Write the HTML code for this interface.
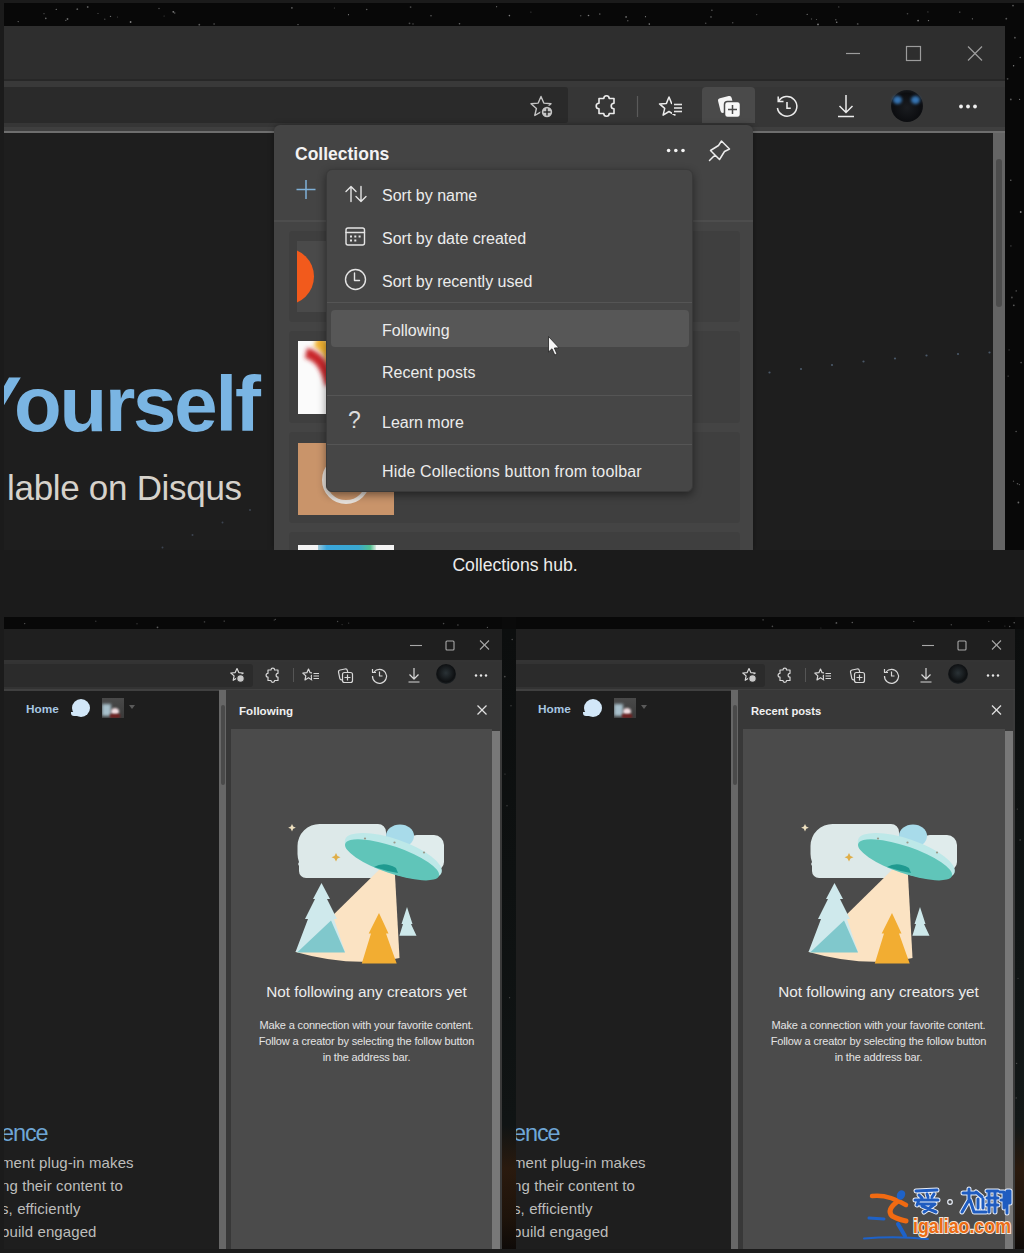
<!DOCTYPE html>
<html><head><meta charset="utf-8">
<style>
*{box-sizing:border-box;margin:0;padding:0}
html,body{width:1024px;height:1253px;overflow:hidden;background:#1b1b1b;font-family:"Liberation Sans",sans-serif}
.a{position:absolute}
svg{position:absolute;overflow:visible}
</style></head><body>
<div class="a" style="left:0;top:0;width:1024px;height:1253px">

<!-- ===== TOP SCREENSHOT ===== -->
<div class="a" style="left:4px;top:3px;width:1020px;height:547px;background:#080808"></div>

<div class="a" id="topwin" style="left:0;top:0;width:1024px;height:1253px;clip-path:inset(26px 19px 703px 4px)">
<div class="a" style="left:4px;top:26px;width:1001px;height:524px;background:#1e1e1e"></div>
<div class="a" style="left:4px;top:26px;width:1001px;height:53px;background:#2e2e2e"></div>
<div class="a" style="left:4px;top:79px;width:1001px;height:1.5px;background:#272727"></div>
<div class="a" style="left:4px;top:80.5px;width:1001px;height:46.5px;background:#363636"></div>
<div class="a" style="left:4px;top:80.5px;width:1001px;height:6px;background:#393939"></div>
<div class="a" style="left:4px;top:127px;width:1001px;height:5px;background:#3f3f3f"></div>
<div class="a" style="left:4px;top:131px;width:1001px;height:1.5px;background:#6e6e6e"></div>
<!-- address bar -->
<div class="a" style="left:4px;top:87px;width:563.5px;height:36px;background:#2a2a2a;border-radius:0 3px 3px 0"></div>
<!-- window controls -->
<svg style="left:0;top:0" width="1024" height="140">
 <g stroke="#9c9c9c" stroke-width="1.2" fill="none">
  <line x1="846" y1="53.5" x2="860" y2="53.5"/>
  <rect x="906.5" y="46.5" width="14" height="14"/>
  <line x1="968" y1="46.5" x2="982" y2="60.5"/><line x1="982" y1="46.5" x2="968" y2="60.5"/>
 </g>
 <!-- favorite star + plus -->
 <path d="M541.0 96.5 L543.8 103.1 L551.0 103.8 L545.6 108.5 L547.2 115.5 L541.0 111.8 L534.8 115.5 L536.4 108.5 L531.0 103.8 L538.2 103.1 Z" stroke="#c4c4c4" stroke-width="1.4" fill="none" stroke-linejoin="round"/>
 <circle cx="547" cy="112" r="6" fill="#c4c4c4" stroke="#2a2a2a" stroke-width="1.6"/>
 <g stroke="#262626" stroke-width="1.4"><line x1="547" y1="108.5" x2="547" y2="115.5"/><line x1="543.5" y1="112" x2="550.5" y2="112"/></g>
 <!-- extensions -->
 <path d="M599 98.5 H603.8 A2.7 2.7 0 0 1 609.2 98.5 H614 V103.2 A2.8 2.8 0 0 0 614 108.8 V113.5 H609.2 A2.7 2.7 0 0 1 603.8 113.5 H599 V108.8 A2.8 2.8 0 0 1 599 103.2 Z" stroke="#ececec" stroke-width="1.6" fill="none" stroke-linejoin="round"/>
 <line x1="637.5" y1="96" x2="637.5" y2="117" stroke="#5a5a5a" stroke-width="1.2"/>
 <!-- favorites -->
 <path d="M669.0 97.0 L671.6 103.4 L678.5 103.9 L673.3 108.4 L674.9 115.1 L669.0 111.5 L663.1 115.1 L664.7 108.4 L659.5 103.9 L666.4 103.4 Z" stroke="#ececec" stroke-width="1.5" fill="none" stroke-linejoin="round"/>
 <rect x="672" y="102" width="12" height="12" fill="#363636"/>
 <g stroke="#e4e4e4" stroke-width="1.6"><line x1="674" y1="104.5" x2="682" y2="104.5"/><line x1="674" y1="108" x2="682" y2="108"/><line x1="674" y1="111.5" x2="682" y2="111.5"/></g>
</svg>
<!-- collections highlight -->
<div class="a" style="left:702px;top:87px;width:53px;height:36px;background:#4a4a4a;border-radius:4px 4px 0 0"></div>
<svg style="left:0;top:0" width="1024" height="140">
 <rect x="719" y="97" width="14" height="15" rx="2.5" fill="#f4f4f4" transform="rotate(-14 726 104)"/>
 <rect x="724.5" y="101.5" width="16" height="16" rx="3" fill="#f8f8f8" stroke="#4a4a4a" stroke-width="1.5"/>
 <g stroke="#4a4a4a" stroke-width="1.5"><line x1="732.5" y1="105" x2="732.5" y2="114"/><line x1="728" y1="109.5" x2="737" y2="109.5"/></g>
 <!-- history -->
 <path d="M778.6 101.4 A9.8 9.8 0 1 1 777.4 108" stroke="#ececec" stroke-width="1.5" fill="none"/>
 <path d="M783.5 101.4 H778.2 V96.5" stroke="#ececec" stroke-width="1.5" fill="none"/>
 <path d="M787 102 v6.2 h3.8" stroke="#ececec" stroke-width="1.6" fill="none"/>
 <!-- download -->
 <path d="M846 95 v17.5 M839.5 106 l6.5 6.5 l6.5 -6.5 M838 116.5 h16" stroke="#ececec" stroke-width="1.5" fill="none"/>
 <!-- more -->
 <g fill="#f0f0f0"><circle cx="961" cy="106.5" r="1.9"/><circle cx="968" cy="106.5" r="1.9"/><circle cx="975" cy="106.5" r="1.9"/></g>
</svg>
<!-- profile -->
<div class="a" style="left:891px;top:90px;width:32px;height:32px;border-radius:50%;background:radial-gradient(circle at 50% 55%,#1a1c20 0,#0c0d10 60%,#2a2f36 100%)"></div>
<div class="a" style="left:893px;top:96px;width:9px;height:8px;border-radius:50%;background:#3a7fc4;filter:blur(1.5px);opacity:.9"></div>
<div class="a" style="left:911px;top:96px;width:9px;height:8px;border-radius:50%;background:#3a7fc4;filter:blur(1.5px);opacity:.9"></div>
<!-- page scrollbar -->
<div class="a" style="left:993px;top:133px;width:12px;height:417px;background:#646464"></div>
<div class="a" style="left:996px;top:159px;width:6px;height:148px;background:#4c4c4c;border-radius:3px"></div>
<svg style="left:0;top:0" width="1024" height="600"><circle cx="769.5" cy="372.5" r="1.1" fill="#4a5868"/><circle cx="801" cy="369" r="1.1" fill="#4a5868"/><circle cx="832" cy="365" r="1.1" fill="#4a5868"/><circle cx="863.5" cy="361.5" r="1.1" fill="#4a5868"/><circle cx="895" cy="358.5" r="1.1" fill="#4a5868"/><circle cx="926.5" cy="355.5" r="1.1" fill="#4a5868"/><circle cx="958" cy="354" r="1.1" fill="#4a5868"/><circle cx="989.5" cy="352.5" r="1.1" fill="#4a5868"/><circle cx="250" cy="510" r="1" fill="#3c4450"/><circle cx="222.5" cy="522.5" r="1" fill="#3c4450"/><circle cx="192.5" cy="535" r="1" fill="#3c4450"/><circle cx="162.5" cy="547.5" r="1" fill="#3c4450"/></svg>
<!-- page text -->
<div class="a" style="left:-30px;top:353.5px;font-size:78px;font-weight:bold;color:#7ab5e3;letter-spacing:-2.2px;white-space:nowrap;line-height:100px">Yourself</div>
<div class="a" style="left:7px;top:465.5px;font-size:35px;color:#d6d2cb;white-space:nowrap;line-height:44px;letter-spacing:-0.3px">lable on Disqus</div>

<!-- ===== COLLECTIONS PANEL ===== -->
<div class="a" style="left:274px;top:125px;width:479px;height:425px;background:#444444;border-radius:6px 6px 0 0;box-shadow:0 0 6px rgba(0,0,0,.35)"></div>
<div class="a" style="left:295px;top:141.5px;font-size:17.5px;font-weight:bold;color:#f2f2f2;line-height:24px;white-space:nowrap">Collections</div>
<svg style="left:0;top:0" width="1024" height="240">
 <g fill="#f4f4f4"><circle cx="668.6" cy="150.5" r="1.8"/><circle cx="675.8" cy="150.5" r="1.8"/><circle cx="683" cy="150.5" r="1.8"/></g>
 <path d="M721.5 141 L729.5 149 L724.5 151.5 L719.5 159.5 L710.5 150.5 L718.5 145.5 Z M715 155 L709.5 160.5" stroke="#ececec" stroke-width="1.5" fill="none" stroke-linejoin="round" stroke-linecap="round"/>
 <g stroke="#7fb0d8" stroke-width="1.5"><line x1="306" y1="180" x2="306" y2="199"/><line x1="296.5" y1="189.5" x2="315.5" y2="189.5"/></g>
</svg>
<div class="a" style="left:274px;top:220px;width:479px;height:2px;background:#4d4d4d"></div>
<!-- cards -->
<div class="a" style="left:289px;top:231px;width:451px;height:91px;background:#3f3f3f;border-radius:4px"></div>
<div class="a" style="left:289px;top:331px;width:451px;height:92px;background:#3f3f3f;border-radius:4px"></div>
<div class="a" style="left:289px;top:432px;width:451px;height:91px;background:#3f3f3f;border-radius:4px"></div>
<div class="a" style="left:289px;top:532px;width:451px;height:30px;background:#3f3f3f;border-radius:4px"></div>
<!-- thumbs -->
<div class="a" style="left:297px;top:241px;width:97px;height:71px;background:#4a4a4a;overflow:hidden">
  <div class="a" style="left:-41px;top:7px;width:58px;height:57px;border-radius:50%;background:#f25a1c"></div>
</div>
<div class="a" style="left:298px;top:341px;width:96px;height:73px;background:#fbfbfb;overflow:hidden">
  <svg style="left:0;top:0" width="96" height="73"><defs><filter id="bl" x="-50%" y="-50%" width="200%" height="200%"><feGaussianBlur stdDeviation="2.2"/></filter></defs>
   <path d="M18 0 Q32 6 34 24" stroke="#f2b232" stroke-width="12" fill="none" filter="url(#bl)"/>
   <path d="M8 12 Q26 16 32 44" stroke="#c9262c" stroke-width="10" fill="none" filter="url(#bl)"/>
  </svg>
</div>
<div class="a" style="left:298px;top:443px;width:96px;height:72px;background:#c9946a;overflow:hidden">
  <div class="a" style="left:24px;top:13px;width:48px;height:48px;border-radius:50%;border:4.5px solid #e6e0da"></div>
</div>
<div class="a" style="left:298px;top:545px;width:96px;height:5px;background:#f4f4f4;overflow:hidden">
  <div class="a" style="left:20px;top:0;width:58px;height:5px;background:linear-gradient(90deg,#a0c8d8,#3aa6dc 15%,#3aa8d0 70%,#50c090 90%,#d8e8e0)"></div>
</div>
<!-- menu -->
<div class="a" style="left:326px;top:169px;width:367px;height:323px;background:#464646;border-radius:6px;border:1px solid #3a3a3a;box-shadow:0 3px 8px rgba(0,0,0,.45)"></div>
<div class="a" style="left:327px;top:302px;width:365px;height:1px;background:#555"></div>
<div class="a" style="left:327px;top:395px;width:365px;height:1px;background:#555"></div>
<div class="a" style="left:327px;top:444px;width:365px;height:1px;background:#555"></div>
<div class="a" style="left:331px;top:310px;width:358px;height:37px;background:#575757;border-radius:4px"></div>
<div class="a" style="left:382px;top:0;font-size:16px;color:#ececec;white-space:nowrap;line-height:20px">
  <div class="a" style="left:0;top:185.5px">Sort by name</div>
  <div class="a" style="left:0;top:228.5px">Sort by date created</div>
  <div class="a" style="left:0;top:271.5px">Sort by recently used</div>
  <div class="a" style="left:0;top:320.5px">Following</div>
  <div class="a" style="left:0;top:362.5px">Recent posts</div>
  <div class="a" style="left:0;top:412.5px">Learn more</div>
  <div class="a" style="left:0;top:461.5px;letter-spacing:.15px">Hide Collections button from toolbar</div>
</div>
<svg style="left:0;top:0" width="1024" height="500">
 <g stroke="#e4e4e4" stroke-width="1.4" fill="none" stroke-linecap="round" stroke-linejoin="round">
  <path d="M351 201.5 V186.5 M346 191.5 l5 -5 l5 5"/>
  <path d="M361 186.5 V201.5 M356 196.5 l5 5 l5 -5"/>
  <rect x="346" y="228" width="18.5" height="17" rx="2"/>
  <line x1="346" y1="232.5" x2="364.5" y2="232.5"/>
  <circle cx="355.5" cy="279.5" r="10"/>
  <path d="M354.5 273 v7.5 h5"/>
 </g>
 <g fill="#e4e4e4"><rect x="350" y="235.5" width="2" height="2"/><rect x="354.3" y="235.5" width="2" height="2"/><rect x="358.6" y="235.5" width="2" height="2"/><rect x="350" y="239.5" width="2" height="2"/><rect x="354.3" y="239.5" width="2" height="2"/></g>
 <!-- cursor -->
 <path d="M548.5 336.5 V352 L552 348.8 L554.8 355 L557 354 L554.3 348 L559 347.8 Z" fill="#f4f4f4" stroke="#222" stroke-width="0.8"/>
</svg>
<div class="a" style="left:348px;top:406px;font-size:23px;color:#dcdcdc;line-height:28px">?</div>

</div>
<div class="a" style="left:0;top:554px;width:1030px;text-align:center;font-size:17.6px;color:#ececec;line-height:22px">Collections hub.</div>
<!-- ===== BOTTOM ===== -->
<div class="a" style="left:4px;top:617px;width:1020px;height:632px;background:#0a0a0a"></div>
<div class="a" style="left:4px;top:617px;width:498px;height:632px;overflow:hidden;background:#1e1e1e">
<div class="a" style="left:0;top:0;width:100%;height:12px;background:#080808"></div>
<div class="a" style="left:0;top:12px;width:100%;height:31px;background:#1f1f1f"></div>
<div class="a" style="left:0;top:43px;width:100%;height:2px;background:#343434"></div>
<div class="a" style="left:0;top:45px;width:100%;height:27px;background:#333333"></div>
<div class="a" style="left:0;top:47px;width:249px;height:22.5px;background:#2b2b2b;border-radius:0 3px 3px 0"></div>
<div class="a" style="left:0;top:72px;width:100%;height:2px;background:#404040"></div>
<div class="a" style="left:215px;top:73px;width:7.5px;height:559px;background:#676767"></div>
<div class="a" style="left:217px;top:88px;width:3.5px;height:80px;background:#4a4a4a;border-radius:2px"></div>
<div class="a" style="left:222px;top:73px;width:276px;height:559px;background:#383838"></div>
<div class="a" style="left:227px;top:112px;width:261px;height:520px;background:#4b4b4b"></div>
<div class="a" style="left:488px;top:114px;width:8px;height:518px;background:#787878"></div>
<div class="a" style="left:496px;top:73px;width:2px;height:559px;background:#3a3a3a"></div>
<div class="a" style="left:235px;top:86px;font-size:11.6px;font-weight:bold;color:#f0f0f0;line-height:16px;white-space:nowrap">Following</div>
<div class="a" style="left:22px;top:84.5px;font-size:11.8px;font-weight:bold;color:#a8c7e2;line-height:14px">Home</div>
<div class="a" style="left:68px;top:82px;width:18px;height:18px;border-radius:50%;background:#d2e7f8"></div><div class="a" style="left:67px;top:95px;width:6px;height:4px;background:#d2e7f8;border-radius:0 0 0 3px"></div>
<div class="a" style="left:98px;top:81px;width:22px;height:20px;background:linear-gradient(180deg,#4a4a4a,#3a3a3a);overflow:hidden"><div class="a" style="left:0;top:6px;width:9px;height:12px;background:#a8c0cc;filter:blur(1.5px)"></div><div class="a" style="left:9px;top:10px;width:8px;height:7px;border-radius:50%;background:#f0dce0;filter:blur(1px)"></div><div class="a" style="left:8px;top:16px;width:10px;height:4px;background:#702020;filter:blur(1px)"></div></div>
<div class="a" style="left:125px;top:88px;width:0;height:0;border-left:3.5px solid transparent;border-right:3.5px solid transparent;border-top:4px solid #5a5a5a"></div>
<div class="a" style="left:-3px;top:500.5px;font-size:23.5px;color:#6ea6d6;line-height:30px;white-space:nowrap;letter-spacing:-1.1px">ence</div>
<div class="a" style="left:-3px;top:534px;font-size:15px;color:#bdbdbb;line-height:23px;white-space:nowrap;letter-spacing:0.1px">ment plug-in makes<br>ng their content to<br>s, efficiently<br>build engaged</div>
<div class="a" style="left:227px;top:365px;width:271px;text-align:center;font-size:15.3px;color:#ececec;line-height:20px;white-space:nowrap">Not following any creators yet</div>
<div class="a" style="left:227px;top:400px;width:271px;text-align:center;font-size:11px;color:#e4e4e4;line-height:16px;white-space:nowrap;letter-spacing:-0.15px">Make a connection with your favorite content.<br>Follow a creator by selecting the follow button<br>in the address bar.</div>
</div>
<svg style="left:4px;top:617px" width="500" height="632">
 <g stroke="#a8a8a8" stroke-width="1.1" fill="none">
  <line x1="406" y1="28.5" x2="418" y2="28.5"/>
  <rect x="442" y="24" width="8" height="9" rx="1"/>
  <line x1="476" y1="23.5" x2="485" y2="32.5"/><line x1="485" y1="23.5" x2="476" y2="32.5"/>
 </g>
 <g stroke="#d8d8d8" stroke-width="1.2" fill="none" stroke-linejoin="round">
  <path d="M233.0 51.5 L234.8 55.6 L239.2 56.0 L235.9 58.9 L236.8 63.3 L233.0 61.0 L229.2 63.3 L230.1 58.9 L226.8 56.0 L231.2 55.6 Z"/>
  <path d="M264 53 H267 A1.8 1.8 0 0 1 270.6 53 H274 V56.3 A1.9 1.9 0 0 0 274 60.1 V63.5 H270.6 A1.8 1.8 0 0 1 267 63.5 H264 V60.1 A1.9 1.9 0 0 1 264 56.3 Z"/>
  <path d="M304.5 52.0 L306.1 55.7 L310.2 56.1 L307.2 58.9 L308.0 62.9 L304.5 60.8 L301.0 62.9 L301.8 58.9 L298.8 56.1 L302.9 55.7 Z"/>
  <rect x="308" y="55" width="8" height="8" fill="#333333" stroke="none"/>
  <path d="M309.5 56.5 h5.5 M309.5 59 h5.5 M309.5 61.5 h5.5"/>
  <rect x="335" y="52.5" width="9" height="10" rx="2" transform="rotate(-12 339 57)"/>
  <rect x="338.5" y="55.5" width="10" height="10" rx="2" fill="#333333"/>
  <path d="M343.5 57.5 v6 M340.5 60.5 h6"/>
  <path d="M370 55 A7 7 0 1 1 368.5 59"/><path d="M368.5 52 v3.5 h3.5"/><path d="M375.5 54.5 v4.5 h3"/>
  <path d="M410 51 v10.5 M405.5 57.5 l4.5 4.5 l4.5 -4.5 M404.5 65 h11"/>
 </g>
 <line x1="289.5" y1="51" x2="289.5" y2="65" stroke="#555" stroke-width="1"/>
 <circle cx="236.5" cy="61.5" r="3.8" fill="#c8c8c8" stroke="#2b2b2b" stroke-width="1.2"/>
 <g fill="#e8e8e8"><circle cx="472" cy="58.5" r="1.2"/><circle cx="477" cy="58.5" r="1.2"/><circle cx="482" cy="58.5" r="1.2"/></g>
 <g stroke="#e0e0e0" stroke-width="1.2" transform="translate(0 0)"><line x1="473.5" y1="88.5" x2="482.5" y2="97.5"/><line x1="482.5" y1="88.5" x2="473.5" y2="97.5"/></g>
</svg>
<div class="a" style="left:436px;top:664px;width:20px;height:20px;border-radius:50%;background:radial-gradient(circle at 50% 45%,#2a3236 0,#0e1012 60%,#3a4448 100%)"></div>
<div class="a" style="left:516px;top:617px;width:499px;height:632px;overflow:hidden;background:#1e1e1e">
<div class="a" style="left:0;top:0;width:100%;height:12px;background:#080808"></div>
<div class="a" style="left:0;top:12px;width:100%;height:31px;background:#1f1f1f"></div>
<div class="a" style="left:0;top:43px;width:100%;height:2px;background:#343434"></div>
<div class="a" style="left:0;top:45px;width:100%;height:27px;background:#333333"></div>
<div class="a" style="left:0;top:47px;width:249px;height:22.5px;background:#2b2b2b;border-radius:0 3px 3px 0"></div>
<div class="a" style="left:0;top:72px;width:100%;height:2px;background:#404040"></div>
<div class="a" style="left:215px;top:73px;width:7.5px;height:559px;background:#676767"></div>
<div class="a" style="left:217px;top:88px;width:3.5px;height:80px;background:#4a4a4a;border-radius:2px"></div>
<div class="a" style="left:222px;top:73px;width:277px;height:559px;background:#383838"></div>
<div class="a" style="left:227px;top:112px;width:262px;height:520px;background:#4b4b4b"></div>
<div class="a" style="left:489px;top:114px;width:8px;height:518px;background:#787878"></div>
<div class="a" style="left:497px;top:73px;width:2px;height:559px;background:#3a3a3a"></div>
<div class="a" style="left:235px;top:86px;font-size:11.2px;font-weight:bold;color:#f0f0f0;line-height:16px;white-space:nowrap">Recent posts</div>
<div class="a" style="left:22px;top:84.5px;font-size:11.8px;font-weight:bold;color:#a8c7e2;line-height:14px">Home</div>
<div class="a" style="left:68px;top:82px;width:18px;height:18px;border-radius:50%;background:#d2e7f8"></div><div class="a" style="left:67px;top:95px;width:6px;height:4px;background:#d2e7f8;border-radius:0 0 0 3px"></div>
<div class="a" style="left:98px;top:81px;width:22px;height:20px;background:linear-gradient(180deg,#4a4a4a,#3a3a3a);overflow:hidden"><div class="a" style="left:0;top:6px;width:9px;height:12px;background:#a8c0cc;filter:blur(1.5px)"></div><div class="a" style="left:9px;top:10px;width:8px;height:7px;border-radius:50%;background:#f0dce0;filter:blur(1px)"></div><div class="a" style="left:8px;top:16px;width:10px;height:4px;background:#702020;filter:blur(1px)"></div></div>
<div class="a" style="left:125px;top:88px;width:0;height:0;border-left:3.5px solid transparent;border-right:3.5px solid transparent;border-top:4px solid #5a5a5a"></div>
<div class="a" style="left:-3px;top:500.5px;font-size:23.5px;color:#6ea6d6;line-height:30px;white-space:nowrap;letter-spacing:-1.1px">ence</div>
<div class="a" style="left:-3px;top:534px;font-size:15px;color:#bdbdbb;line-height:23px;white-space:nowrap;letter-spacing:0.1px">ment plug-in makes<br>ng their content to<br>s, efficiently<br>build engaged</div>
<div class="a" style="left:227px;top:365px;width:271px;text-align:center;font-size:15.3px;color:#ececec;line-height:20px;white-space:nowrap">Not following any creators yet</div>
<div class="a" style="left:227px;top:400px;width:271px;text-align:center;font-size:11px;color:#e4e4e4;line-height:16px;white-space:nowrap;letter-spacing:-0.15px">Make a connection with your favorite content.<br>Follow a creator by selecting the follow button<br>in the address bar.</div>
</div>
<svg style="left:516px;top:617px" width="500" height="632">
 <g stroke="#a8a8a8" stroke-width="1.1" fill="none">
  <line x1="406" y1="28.5" x2="418" y2="28.5"/>
  <rect x="442" y="24" width="8" height="9" rx="1"/>
  <line x1="476" y1="23.5" x2="485" y2="32.5"/><line x1="485" y1="23.5" x2="476" y2="32.5"/>
 </g>
 <g stroke="#d8d8d8" stroke-width="1.2" fill="none" stroke-linejoin="round">
  <path d="M233.0 51.5 L234.8 55.6 L239.2 56.0 L235.9 58.9 L236.8 63.3 L233.0 61.0 L229.2 63.3 L230.1 58.9 L226.8 56.0 L231.2 55.6 Z"/>
  <path d="M264 53 H267 A1.8 1.8 0 0 1 270.6 53 H274 V56.3 A1.9 1.9 0 0 0 274 60.1 V63.5 H270.6 A1.8 1.8 0 0 1 267 63.5 H264 V60.1 A1.9 1.9 0 0 1 264 56.3 Z"/>
  <path d="M304.5 52.0 L306.1 55.7 L310.2 56.1 L307.2 58.9 L308.0 62.9 L304.5 60.8 L301.0 62.9 L301.8 58.9 L298.8 56.1 L302.9 55.7 Z"/>
  <rect x="308" y="55" width="8" height="8" fill="#333333" stroke="none"/>
  <path d="M309.5 56.5 h5.5 M309.5 59 h5.5 M309.5 61.5 h5.5"/>
  <rect x="335" y="52.5" width="9" height="10" rx="2" transform="rotate(-12 339 57)"/>
  <rect x="338.5" y="55.5" width="10" height="10" rx="2" fill="#333333"/>
  <path d="M343.5 57.5 v6 M340.5 60.5 h6"/>
  <path d="M370 55 A7 7 0 1 1 368.5 59"/><path d="M368.5 52 v3.5 h3.5"/><path d="M375.5 54.5 v4.5 h3"/>
  <path d="M410 51 v10.5 M405.5 57.5 l4.5 4.5 l4.5 -4.5 M404.5 65 h11"/>
 </g>
 <line x1="289.5" y1="51" x2="289.5" y2="65" stroke="#555" stroke-width="1"/>
 <circle cx="236.5" cy="61.5" r="3.8" fill="#c8c8c8" stroke="#2b2b2b" stroke-width="1.2"/>
 <g fill="#e8e8e8"><circle cx="472" cy="58.5" r="1.2"/><circle cx="477" cy="58.5" r="1.2"/><circle cx="482" cy="58.5" r="1.2"/></g>
 <g stroke="#e0e0e0" stroke-width="1.2" transform="translate(2.5 0)"><line x1="473.5" y1="88.5" x2="482.5" y2="97.5"/><line x1="482.5" y1="88.5" x2="473.5" y2="97.5"/></g>
</svg>
<div class="a" style="left:948px;top:664px;width:20px;height:20px;border-radius:50%;background:radial-gradient(circle at 50% 45%,#2a3236 0,#0e1012 60%,#3a4448 100%)"></div>
<!-- ===== END BOTTOM ===== -->
<!-- ===== ILLUS ===== -->
<svg style="left:0;top:0" width="1024" height="1253"><g transform="translate(0 0)">
 <path d="M292 824 l1.2 2.6 l2.6 1.1 l-2.6 1.1 l-1.2 2.6 l-1.2 -2.6 l-2.6 -1.1 l2.6 -1.1 z" fill="#eee0bf"/>
 <!-- right cloud -->
 <path d="M405 870 H436 a8 8 0 0 0 8 -8 V845 a10 10 0 0 0 -10 -10 H418 a12 12 0 0 0 -13 12 z" fill="#e0ecec"/>
 <!-- dome -->
 <ellipse cx="400" cy="836" rx="14" ry="11.5" fill="#a8dbea"/>
 <!-- main cloud -->
 <path d="M320 824 H378 a8 8 0 0 1 8 8 V870 a8 8 0 0 1 -8 8 H306 a7 7 0 0 1 -7 -7 V866 a3 3 0 0 1 0 -4 a24 24 0 0 1 -1.5 -8 V846 a22 22 0 0 1 22.5 -22 z" fill="#dde9e9"/>
 <path d="M336 853 l1.5 3 l3 1.2 l-3 1.2 l-1.5 3 l-1.5 -3 l-3 -1.2 l3 -1.2 z" fill="#dfae48"/>
 <!-- beam -->
 <path d="M383 866 L394.5 866 L399.5 958 Q352 968 295.5 952 Z" fill="#fbe3c3"/>
 <!-- disk -->
 <g transform="rotate(19 393 857)">
  <ellipse cx="393" cy="856" rx="51" ry="17" fill="#bde8e8"/>
  <ellipse cx="393" cy="860" rx="49.5" ry="13.5" fill="#60c5b9"/>
 </g>
 <path d="M374 867 q10 -6 22 1 l2 5 q-12 -2 -24 -6z" fill="#1f9a90"/>
 <g fill="#9a9a8a"><circle cx="365" cy="838.5" r="1.1"/><circle cx="394.5" cy="842.5" r="1.1"/><circle cx="424" cy="852.5" r="1.1"/></g>
 <!-- light tree -->
 <path d="M321.5 883 L330 899 L327 899 L337 919 L334 919 L345 952 L295.5 952 L308 919 L305 919 L315 899 L313 899 Z" fill="#cfe9ec"/>
 <path d="M331 920.5 L345 952.5 L297 952.5 Z" fill="#80c8cc"/>
 <!-- orange tree -->
 <path d="M379 913 L388.5 933.5 L386 933.5 L396.7 963.5 L361.8 963.5 L371 933.5 L368.7 933.5 Z" fill="#f2ad32"/>
 <!-- small tree -->
 <path d="M407 907 L412.5 924 L411 924 L416.5 935.7 L399.4 935.7 L403 924 L401.5 924 Z" fill="#cde8ea"/>
</g></svg>
<svg style="left:0;top:0" width="1024" height="1253"><g transform="translate(513 0)">
 <path d="M292 824 l1.2 2.6 l2.6 1.1 l-2.6 1.1 l-1.2 2.6 l-1.2 -2.6 l-2.6 -1.1 l2.6 -1.1 z" fill="#eee0bf"/>
 <!-- right cloud -->
 <path d="M405 870 H436 a8 8 0 0 0 8 -8 V845 a10 10 0 0 0 -10 -10 H418 a12 12 0 0 0 -13 12 z" fill="#e0ecec"/>
 <!-- dome -->
 <ellipse cx="400" cy="836" rx="14" ry="11.5" fill="#a8dbea"/>
 <!-- main cloud -->
 <path d="M320 824 H378 a8 8 0 0 1 8 8 V870 a8 8 0 0 1 -8 8 H306 a7 7 0 0 1 -7 -7 V866 a3 3 0 0 1 0 -4 a24 24 0 0 1 -1.5 -8 V846 a22 22 0 0 1 22.5 -22 z" fill="#dde9e9"/>
 <path d="M336 853 l1.5 3 l3 1.2 l-3 1.2 l-1.5 3 l-1.5 -3 l-3 -1.2 l3 -1.2 z" fill="#dfae48"/>
 <!-- beam -->
 <path d="M383 866 L394.5 866 L399.5 958 Q352 968 295.5 952 Z" fill="#fbe3c3"/>
 <!-- disk -->
 <g transform="rotate(19 393 857)">
  <ellipse cx="393" cy="856" rx="51" ry="17" fill="#bde8e8"/>
  <ellipse cx="393" cy="860" rx="49.5" ry="13.5" fill="#60c5b9"/>
 </g>
 <path d="M374 867 q10 -6 22 1 l2 5 q-12 -2 -24 -6z" fill="#1f9a90"/>
 <g fill="#9a9a8a"><circle cx="365" cy="838.5" r="1.1"/><circle cx="394.5" cy="842.5" r="1.1"/><circle cx="424" cy="852.5" r="1.1"/></g>
 <!-- light tree -->
 <path d="M321.5 883 L330 899 L327 899 L337 919 L334 919 L345 952 L295.5 952 L308 919 L305 919 L315 899 L313 899 Z" fill="#cfe9ec"/>
 <path d="M331 920.5 L345 952.5 L297 952.5 Z" fill="#80c8cc"/>
 <!-- orange tree -->
 <path d="M379 913 L388.5 933.5 L386 933.5 L396.7 963.5 L361.8 963.5 L371 933.5 L368.7 933.5 Z" fill="#f2ad32"/>
 <!-- small tree -->
 <path d="M407 907 L412.5 924 L411 924 L416.5 935.7 L399.4 935.7 L403 924 L401.5 924 Z" fill="#cde8ea"/>
</g></svg>
<!-- ===== END ILLUS ===== -->
<div class="a" style="left:502px;top:629px;width:14px;height:620px;background:linear-gradient(180deg,#0c0e0e 0,#101414 80%,#2a1a0e 87%,#1e130a 95%,#0e0a08 100%)"></div>
<div class="a" style="left:1015px;top:629px;width:9px;height:620px;background:linear-gradient(180deg,#0c0e0e 0,#131818 80%,#2a1a0e 87%,#1e130a 95%,#0e0a08 100%)"></div>
<!-- ===== STARS ===== -->
<svg style="left:0;top:0" width="1024" height="1253"><circle cx="334.4" cy="8.0" r="0.6" fill="#4a4a4a"/><circle cx="838.8" cy="6.9" r="0.6" fill="#5a5a5a"/><circle cx="44.0" cy="13.7" r="0.6" fill="#5a5a5a"/><circle cx="98.0" cy="13.5" r="0.6" fill="#5a5a5a"/><circle cx="645.5" cy="16.7" r="0.6" fill="#808080"/><circle cx="56.3" cy="9.4" r="0.7" fill="#6a6a6a"/><circle cx="431.0" cy="15.8" r="0.8" fill="#5a5a5a"/><circle cx="110.5" cy="16.4" r="0.7" fill="#6a6a6a"/><circle cx="104.8" cy="19.2" r="0.6" fill="#5a5a5a"/><circle cx="509.4" cy="15.6" r="0.8" fill="#808080"/><circle cx="599.8" cy="14.1" r="0.8" fill="#5a5a5a"/><circle cx="811.5" cy="19.0" r="0.7" fill="#4a4a4a"/><circle cx="588.5" cy="15.5" r="0.8" fill="#808080"/><circle cx="298.0" cy="24.6" r="0.6" fill="#808080"/><circle cx="173.3" cy="11.8" r="0.9" fill="#808080"/><circle cx="45.8" cy="18.4" r="0.8" fill="#6a6a6a"/><circle cx="711.0" cy="16.9" r="0.9" fill="#4a4a4a"/><circle cx="857.7" cy="23.9" r="0.9" fill="#4a4a4a"/><circle cx="67.5" cy="19.0" r="0.9" fill="#6a6a6a"/><circle cx="732.7" cy="22.7" r="0.8" fill="#4a4a4a"/><circle cx="959.8" cy="12.1" r="0.6" fill="#808080"/><circle cx="65.8" cy="20.4" r="0.7" fill="#5a5a5a"/><circle cx="409.5" cy="23.3" r="0.9" fill="#4a4a4a"/><circle cx="174.7" cy="13.0" r="0.8" fill="#5a5a5a"/><circle cx="836.7" cy="22.3" r="0.8" fill="#808080"/><circle cx="1006.3" cy="18.7" r="0.9" fill="#5a5a5a"/><circle cx="159.0" cy="8.5" r="0.7" fill="#5a5a5a"/><circle cx="18.2" cy="21.6" r="0.7" fill="#6a6a6a"/><circle cx="291.9" cy="7.9" r="0.8" fill="#6a6a6a"/><circle cx="972.4" cy="18.8" r="0.6" fill="#808080"/><circle cx="918.1" cy="20.6" r="0.9" fill="#808080"/><circle cx="410.6" cy="7.1" r="0.9" fill="#4a4a4a"/><circle cx="199.3" cy="24.7" r="0.9" fill="#5a5a5a"/><circle cx="117.5" cy="17.0" r="0.6" fill="#4a4a4a"/><circle cx="580.7" cy="15.7" r="0.8" fill="#4a4a4a"/><circle cx="77.3" cy="9.2" r="0.9" fill="#5a5a5a"/><circle cx="649.3" cy="24.1" r="0.8" fill="#808080"/><circle cx="130.6" cy="22.0" r="0.9" fill="#808080"/><circle cx="496.6" cy="6.7" r="0.6" fill="#6a6a6a"/><circle cx="756.7" cy="14.6" r="0.7" fill="#4a4a4a"/><circle cx="214.1" cy="24.0" r="0.8" fill="#5a5a5a"/><circle cx="705.7" cy="23.3" r="0.8" fill="#4a4a4a"/><circle cx="711.9" cy="10.2" r="0.8" fill="#5a5a5a"/><circle cx="366.7" cy="9.5" r="0.8" fill="#5a5a5a"/><circle cx="627.8" cy="20.8" r="0.7" fill="#5a5a5a"/><circle cx="835.8" cy="19.8" r="0.7" fill="#5a5a5a"/><circle cx="530.9" cy="12.1" r="0.6" fill="#4a4a4a"/><circle cx="807.2" cy="14.4" r="0.7" fill="#6a6a6a"/><circle cx="459.5" cy="23.7" r="0.8" fill="#6a6a6a"/><circle cx="87.7" cy="7.0" r="0.9" fill="#5a5a5a"/><circle cx="348.5" cy="14.7" r="0.6" fill="#808080"/><circle cx="927.9" cy="11.9" r="0.6" fill="#4a4a4a"/><circle cx="928.5" cy="20.6" r="0.7" fill="#808080"/><circle cx="907.5" cy="13.7" r="0.8" fill="#4a4a4a"/><circle cx="818.0" cy="24.4" r="0.9" fill="#808080"/><circle cx="413.0" cy="23.9" r="0.7" fill="#5a5a5a"/><circle cx="1013.0" cy="5.6" r="0.9" fill="#5a5a5a"/><circle cx="626.1" cy="16.9" r="0.9" fill="#6a6a6a"/><circle cx="164.1" cy="16.0" r="0.6" fill="#4a4a4a"/><circle cx="816.5" cy="19.5" r="0.6" fill="#5a5a5a"/><circle cx="1013.5" cy="481.3" r="0.7" fill="#4a4a4a"/><circle cx="1010.8" cy="180.3" r="0.7" fill="#6a6a6a"/><circle cx="1010.9" cy="245.9" r="0.7" fill="#4a4a4a"/><circle cx="1020.7" cy="212.0" r="0.9" fill="#808080"/><circle cx="1019.4" cy="484.6" r="0.7" fill="#5a5a5a"/><circle cx="1014.9" cy="37.7" r="0.9" fill="#5a5a5a"/><circle cx="1016.1" cy="431.5" r="0.7" fill="#5a5a5a"/><circle cx="1009.1" cy="349.9" r="0.6" fill="#4a4a4a"/><circle cx="1011.9" cy="297.5" r="0.9" fill="#4a4a4a"/><circle cx="1020.2" cy="57.5" r="0.7" fill="#6a6a6a"/><circle cx="1007.6" cy="78.8" r="0.9" fill="#4a4a4a"/><circle cx="1018.4" cy="502.5" r="0.9" fill="#6a6a6a"/><circle cx="1016.2" cy="290.9" r="0.7" fill="#6a6a6a"/><circle cx="1013.8" cy="305.3" r="0.9" fill="#5a5a5a"/><circle cx="1017.5" cy="483.8" r="0.8" fill="#5a5a5a"/><circle cx="1019.6" cy="99.3" r="0.6" fill="#808080"/><circle cx="1013.6" cy="65.7" r="0.7" fill="#808080"/><circle cx="1008.1" cy="376.1" r="0.6" fill="#5a5a5a"/><circle cx="1021.1" cy="362.6" r="0.8" fill="#5a5a5a"/><circle cx="1010.8" cy="99.4" r="0.9" fill="#5a5a5a"/><circle cx="763.1" cy="619.8" r="0.9" fill="#3a3a3a"/><circle cx="1009.7" cy="626.5" r="0.7" fill="#5a5a5a"/><circle cx="443.6" cy="623.6" r="0.8" fill="#4a4a4a"/><circle cx="204.5" cy="621.9" r="0.8" fill="#3a3a3a"/><circle cx="348.7" cy="623.1" r="0.6" fill="#4a4a4a"/><circle cx="342.1" cy="624.6" r="0.6" fill="#3a3a3a"/><circle cx="1004.9" cy="626.1" r="0.6" fill="#3a3a3a"/><circle cx="275.3" cy="619.4" r="0.7" fill="#4a4a4a"/><circle cx="772.4" cy="626.4" r="0.8" fill="#4a4a4a"/><circle cx="157.5" cy="627.3" r="0.9" fill="#5a5a5a"/><circle cx="337.6" cy="621.5" r="0.7" fill="#4a4a4a"/><circle cx="913.8" cy="621.4" r="0.6" fill="#5a5a5a"/><circle cx="95.8" cy="621.3" r="0.7" fill="#3a3a3a"/><circle cx="274.2" cy="620.1" r="0.6" fill="#4a4a4a"/><circle cx="1014.2" cy="622.8" r="0.8" fill="#5a5a5a"/><circle cx="137.0" cy="623.7" r="0.7" fill="#3a3a3a"/><circle cx="988.8" cy="621.4" r="0.7" fill="#3a3a3a"/><circle cx="951.3" cy="624.7" r="0.7" fill="#4a4a4a"/><circle cx="457.9" cy="625.0" r="0.8" fill="#4a4a4a"/><circle cx="820.9" cy="628.0" r="0.6" fill="#3a3a3a"/><circle cx="24.7" cy="623.6" r="0.7" fill="#5a5a5a"/><circle cx="487.4" cy="627.4" r="0.6" fill="#5a5a5a"/><circle cx="836.4" cy="622.9" r="0.9" fill="#5a5a5a"/><circle cx="852.3" cy="622.5" r="0.8" fill="#5a5a5a"/><circle cx="224.2" cy="621.1" r="0.7" fill="#5a5a5a"/><circle cx="511.0" cy="705.8" r="0.8" fill="#3a3a3a"/><circle cx="512.2" cy="639.5" r="0.8" fill="#4a4a4a"/><circle cx="504.8" cy="676.6" r="0.9" fill="#4a4a4a"/><circle cx="509.6" cy="997.7" r="0.6" fill="#4a4a4a"/><circle cx="505.0" cy="774.1" r="0.6" fill="#4a4a4a"/><circle cx="507.0" cy="805.7" r="0.8" fill="#3a3a3a"/><circle cx="1016.2" cy="1097.9" r="0.7" fill="#4a4a4a"/><circle cx="1017.3" cy="809.1" r="0.6" fill="#4a4a4a"/><circle cx="1018.0" cy="978.4" r="0.7" fill="#3a3a3a"/><circle cx="1016.6" cy="1063.4" r="0.7" fill="#4a4a4a"/><circle cx="1020.1" cy="840.0" r="0.8" fill="#4a4a4a"/></svg>
<!-- ===== END STARS ===== -->
<!-- ===== WATERMARK ===== -->
<svg style="left:0;top:0" width="1024" height="1253">
 <g fill="none" stroke-linecap="round" stroke-linejoin="round">
  <path d="M872 1196 Q888 1194 906 1205" stroke="#f06a12" stroke-width="4.5"/>
  <path d="M898 1201 Q886 1210 892 1216 Q900 1220 906 1221" stroke="#f06a12" stroke-width="5"/>
  <path d="M869 1218 L884 1219" stroke="#1e62c8" stroke-width="3"/>
  <path d="M898 1224 L905 1236" stroke="#1e62c8" stroke-width="4"/>
  <path d="M864 1238.5 Q896 1236 928 1239" stroke="#1e62c8" stroke-width="2"/>
 </g>
 <ellipse cx="901" cy="1195" rx="4" ry="5" fill="#1e62c8" transform="rotate(30 901 1195)"/>
 <g stroke="#e8eef8" stroke-width="5" fill="none" stroke-linecap="round" stroke-linejoin="round" id="wmo">
  <path d="M916 1191 L937 1190 M919 1195 L922 1198 M927 1194 L928 1197 M934 1194 L932 1197 M915 1200 L938 1200 M919 1200 L917 1205 M920 1204 L935 1204 L924 1212 M922 1206 L936 1212"/>
  <path d="M963 1193 L975 1193 M969 1189 L969 1200 L962 1212 M970 1200 L974 1212 L986 1212 M976 1192 L982 1197 M978 1199 L978 1208 M983 1199 L983 1208"/>
  <path d="M987 1191 L998 1191 M989 1191 L989 1212 M995 1191 L995 1212 M987 1198 L998 1198 M987 1205 L998 1205 M1000 1192 L1004 1192 L1004 1208 M1001 1200 L1004 1200 M1007 1191 L1010 1191 L1010 1203 L1008 1203 M1007 1191 L1007 1213"/>
 </g>
 <g stroke="#1f5cc0" stroke-width="3" fill="none" stroke-linecap="round" stroke-linejoin="round">
  <path d="M916 1191 L937 1190 M919 1195 L922 1198 M927 1194 L928 1197 M934 1194 L932 1197 M915 1200 L938 1200 M919 1200 L917 1205 M920 1204 L935 1204 L924 1212 M922 1206 L936 1212"/>
  <path d="M963 1193 L975 1193 M969 1189 L969 1200 L962 1212 M970 1200 L974 1212 L986 1212 M976 1192 L982 1197 M978 1199 L978 1208 M983 1199 L983 1208"/>
  <path d="M987 1191 L998 1191 M989 1191 L989 1212 M995 1191 L995 1212 M987 1198 L998 1198 M987 1205 L998 1205 M1000 1192 L1004 1192 L1004 1208 M1001 1200 L1004 1200 M1007 1191 L1010 1191 L1010 1203 L1008 1203 M1007 1191 L1007 1213"/>
 </g>
 <circle cx="950" cy="1202" r="2.3" fill="none" stroke="#e8eef8" stroke-width="1.2"/>
 <text x="913" y="1232.5" font-family="Liberation Sans" font-weight="bold" font-size="21" fill="#ec6c14" stroke="#f2e6da" stroke-width="2.2" paint-order="stroke" textLength="98" lengthAdjust="spacingAndGlyphs">igaliao.com</text>
</svg>
<!-- ===== END WATERMARK ===== -->

</div>
</body></html>
